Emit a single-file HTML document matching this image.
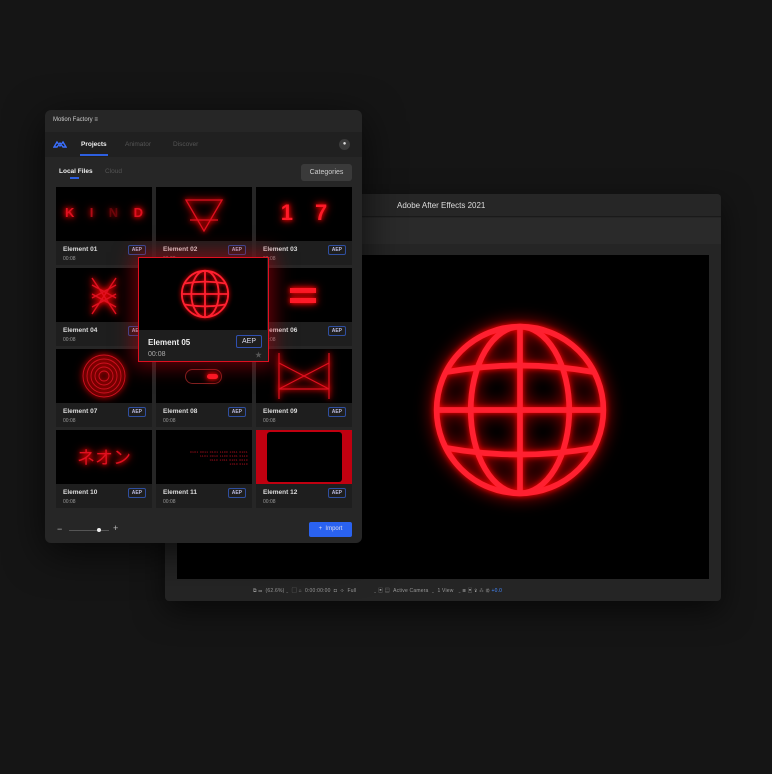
<!DOCTYPE html>
<html><head><meta charset="utf-8"><style>
*{margin:0;padding:0;box-sizing:border-box}
body{width:772px;height:774px;background:#151515;font-family:"Liberation Sans","Noto Sans CJK JP",sans-serif;position:relative;overflow:hidden;color:#ddd}
.abs{position:absolute}
.ae{left:165px;top:194px;width:556px;height:407px;background:#252525;border-radius:4px;box-shadow:0 10px 30px rgba(0,0,0,.6)}
.panel{left:45px;top:110px;width:317px;height:433px;background:#262626;border-radius:6px;box-shadow:0 10px 40px rgba(0,0,0,.7)}
.card{position:absolute;width:96px;height:78px;background:#1e1e1e}
.card .th{position:absolute;left:0;top:0;width:96px;height:54px;background:#000;overflow:hidden}
.card .nm{position:absolute;left:7px;top:59px;font-size:6.5px;font-weight:bold;color:#ddd}
.card .tm{position:absolute;left:7px;top:69px;font-size:5px;color:#999}
.card .b{position:absolute;right:6px;top:58px;font-size:5px;color:#bbd;border:1px solid #2f4fa0;border-radius:2px;padding:1px 3px;font-weight:bold}
.glow{filter:drop-shadow(0 0 2px #f00) drop-shadow(0 0 4px #c00)}
</style></head><body>
<svg width="0" height="0" style="position:absolute"><defs>
<g id="globe" fill="none"><circle r="88"/><ellipse rx="52" ry="88"/><line x1="0" y1="-88" x2="0" y2="88"/><line x1="-88" y1="0" x2="88" y2="0"/><path d="M-78,-40 Q0,-54 78,-40"/><path d="M-78,40 Q0,54 78,40"/></g>
</defs></svg>

<div class="abs ae">
 <div class="abs" style="left:0;top:0;width:556px;height:23px;background:#262626;border-bottom:1px solid #1a1a1a;border-radius:4px 4px 0 0"></div>
 <div class="abs" style="left:232px;top:7px;font-size:8px;color:#ddd">Adobe After Effects 2021</div>
 <div class="abs" style="left:0;top:24px;width:556px;height:26px;background:#2a2a2a"></div>
 <div class="abs" style="left:12px;top:61px;width:532px;height:324px;background:#000"></div>
 <div class="abs" style="left:88px;top:393px;font-size:5px;color:#999;white-space:nowrap;letter-spacing:.2px">⧉ ▭ &nbsp;(62.6%) ⌄ &nbsp;▢ ⌂ &nbsp;0:00:00:00 &nbsp;◘ &nbsp;✣ &nbsp;Full &nbsp;&nbsp;&nbsp;&nbsp;&nbsp;&nbsp;&nbsp;&nbsp;&nbsp;&nbsp;⌄ ▣ ▤ &nbsp;Active Camera &nbsp;⌄ &nbsp;1 View &nbsp;&nbsp;⌄ ⊞ ▣ ⇪ ⁂ ⚙ <span style="color:#48f">+0.0</span></div>
</div>
<svg class="abs" style="left:430px;top:320px;filter:drop-shadow(0 0 3px #f00) drop-shadow(0 0 8px #b00)" width="180" height="180" viewBox="-95 -95 190 190"><use href="#globe" stroke="#ff2030" stroke-width="6"/></svg>

<div class="abs panel">
 <div class="abs" style="left:8px;top:7px;font-size:6px;color:#ccc">Motion Factory ≡</div>
 <div class="abs" style="left:0;top:22px;width:317px;height:25px;background:#202020"></div>
 <svg class="abs" style="left:8px;top:30px" width="14" height="9" viewBox="0 0 14 9"><path d="M1,7 L4,2 L7,6 L10,2 L13,7 L10,7 L7,3 L4,7 Z" fill="none" stroke="#3a6fff" stroke-width="1.4"/></svg>
 <div class="abs" style="left:36px;top:31px;font-size:6.5px;font-weight:bold;color:#eee">Projects</div>
 <div class="abs" style="left:35px;top:44px;width:28px;height:2px;background:#2d5fe0"></div>
 <div class="abs" style="left:80px;top:31px;font-size:6.5px;color:#555">Animator</div>
 <div class="abs" style="left:128px;top:31px;font-size:6.5px;color:#555">Discover</div>
 <div class="abs" style="left:294px;top:29px;width:11px;height:11px;border-radius:50%;background:#3a3a3a;font-size:6px;text-align:center;line-height:11px;color:#ddd">●</div>
 <div class="abs" style="left:14px;top:58px;font-size:6.5px;font-weight:bold;color:#eee">Local Files</div>
 <div class="abs" style="left:25px;top:67px;width:9px;height:2px;background:#2d5fe0"></div>
 <div class="abs" style="left:60px;top:58px;font-size:6.5px;color:#555">Cloud</div>
 <div class="abs" style="left:256px;top:54px;width:51px;height:17px;background:#3a3a3a;border-radius:3px;font-size:7px;color:#ccc;text-align:center;line-height:17px">Categories</div>

 <div class="card" style="left:11px;top:77px"><div class="th"><div class="glow" style="position:absolute;left:9px;top:18px;width:78px;display:flex;justify-content:space-between;font-size:13px;font-weight:bold;color:#e01020"><span>K</span><span style="opacity:.7">I</span><span style="opacity:.3">N</span><span>D</span></div></div><div class="nm">Element 01</div><div class="tm">00:08</div><div class="b">AEP</div></div>
 <div class="card" style="left:111px;top:77px"><div class="th"><svg class="glow" width="96" height="54"><path d="M30,13 L66,13 L48,44 Z M34,33 L62,33" fill="none" stroke="#e01020" stroke-width="1.3"/></svg></div><div class="nm">Element 02</div><div class="tm">00:08</div><div class="b">AEP</div></div>
 <div class="card" style="left:211px;top:77px"><div class="th"><div class="glow" style="position:absolute;left:0;width:96px;top:13px;text-align:center;font-size:22px;font-weight:bold;color:#ff1a28;letter-spacing:8px;padding-left:8px">1 7</div></div><div class="nm">Element 03</div><div class="tm">00:08</div><div class="b">AEP</div></div>
 <div class="card" style="left:11px;top:158px"><div class="th"><svg class="glow" width="96" height="54"><path d="M36,10 L60,46 M60,10 L36,46 M36,17 L60,30 M60,17 L36,30 M36,26 L60,39 M60,26 L36,39" stroke="#e01020" stroke-width="1.4"/></svg></div><div class="nm">Element 04</div><div class="tm">00:08</div><div class="b">AEP</div></div>
 <div class="card" style="left:211px;top:158px"><div class="th"><div class="glow" style="position:absolute;left:34px;top:20px;width:26px;height:5px;background:#ff1a28"></div><div class="glow" style="position:absolute;left:34px;top:30px;width:26px;height:5px;background:#ff1a28"></div></div><div class="nm">Element 06</div><div class="tm">00:08</div><div class="b">AEP</div></div>
 <div class="card" style="left:11px;top:239px"><div class="th"><svg class="glow" width="96" height="54"><g fill="none" stroke="#d01020" stroke-width=".9"><circle cx="48" cy="27" r="21"/><circle cx="48" cy="27" r="17"/><circle cx="48" cy="27" r="13"/><circle cx="48" cy="27" r="9"/><circle cx="48" cy="27" r="5"/></g></svg></div><div class="nm">Element 07</div><div class="tm">00:08</div><div class="b">AEP</div></div>
 <div class="card" style="left:111px;top:239px"><div class="th"><div style="position:absolute;left:29px;top:20px;width:37px;height:15px;border:1px solid #802020;border-radius:8px"></div><div class="glow" style="position:absolute;left:51px;top:25px;width:11px;height:5px;border-radius:3px;background:#ff1a28"></div></div><div class="nm">Element 08</div><div class="tm">00:08</div><div class="b">AEP</div></div>
 <div class="card" style="left:211px;top:239px"><div class="th"><svg class="glow" width="96" height="54"><path d="M23,4 L23,50 M73,4 L73,50 M23,14 L73,40 M73,14 L23,40 M23,40 L73,40" fill="none" stroke="#e01020" stroke-width="1.2"/></svg></div><div class="nm">Element 09</div><div class="tm">00:08</div><div class="b">AEP</div></div>
 <div class="card" style="left:11px;top:320px"><div class="th"><div class="glow" style="position:absolute;left:0;width:96px;top:14px;text-align:center;font-size:18px;color:#e01020;font-family:'Noto Sans CJK JP',sans-serif">ネオン</div></div><div class="nm">Element 10</div><div class="tm">00:08</div><div class="b">AEP</div></div>
 <div class="card" style="left:111px;top:320px"><div class="th"><div style="position:absolute;left:8px;top:20px;width:84px;font-size:3px;line-height:4px;color:#c01020;text-align:right;letter-spacing:.5px">0101 0011 0101 1100 1011 0101<br>1101 0010 1100 0101 0110<br>0110 1011 0101 0010<br>1010 0110</div></div><div class="nm">Element 11</div><div class="tm">00:08</div><div class="b">AEP</div></div>
 <div class="card" style="left:211px;top:320px"><div class="th" style="background:#c00010"><div style="position:absolute;left:11px;top:2px;width:75px;height:50px;background:#000;border-radius:3px"></div></div><div class="nm">Element 12</div><div class="tm">00:08</div><div class="b">AEP</div></div>

 <div class="abs" style="left:12px;top:414px;font-size:9px;color:#bbb">−</div>
 <div class="abs" style="left:24px;top:420px;width:40px;height:1px;background:#555"></div>
 <div class="abs" style="left:52px;top:418px;width:4px;height:4px;border-radius:50%;background:#eee"></div>
 <div class="abs" style="left:68px;top:413px;font-size:9px;color:#bbb">+</div>
 <div class="abs" style="left:264px;top:412px;width:43px;height:15px;background:#2a62f0;border-radius:2px;font-size:6px;color:#dde;text-align:center;line-height:15px">+ &nbsp;Import</div>
</div>

<div class="abs" style="left:138px;top:257px;width:131px;height:105px;background:#1e1e1e;border:1.5px solid #e01020;box-shadow:0 0 18px 5px rgba(200,0,16,.5)">
 <div class="abs" style="left:0;top:0;width:128px;height:72px;background:#000"></div>
 <svg class="abs" style="left:41px;top:11px;filter:drop-shadow(0 0 2px #f00)" width="50" height="50" viewBox="-95 -95 190 190"><use href="#globe" stroke="#ff2030" stroke-width="7"/></svg>
 <div class="abs" style="left:9px;top:80px;font-size:8px;font-weight:bold;color:#eee">Element 05</div>
 <div class="abs" style="left:9px;top:93px;font-size:7px;color:#aaa">00:08</div>
 <div class="abs" style="right:6px;top:77px;font-size:7px;color:#dde;border:1px solid #3050b0;border-radius:2px;padding:2px 5px">AEP</div>
 <div class="abs" style="right:6px;top:92px;font-size:7px;color:#555">★</div>
</div>
</body></html>
